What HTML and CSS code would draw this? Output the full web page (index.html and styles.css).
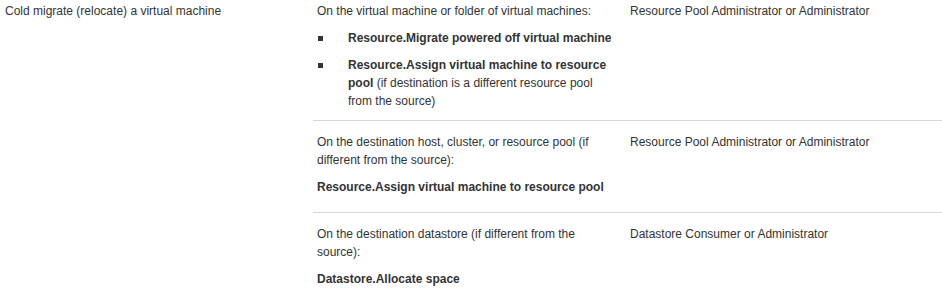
FILE: index.html
```html
<!DOCTYPE html>
<html lang="en">
<head>
<meta charset="utf-8">
<title>Privileges</title>
<link rel="stylesheet" href="styles.css">
</head>
<body>
<table class="priv">
  <colgroup>
    <col class="c-task">
    <col class="c-priv">
    <col class="c-role">
  </colgroup>
  <tbody>
    <tr class="first">
      <td class="task" rowspan="3">Cold migrate (relocate) a virtual machine</td>
      <td class="priv-cell">
        <p>On the virtual machine or folder of virtual machines:</p>
        <ul class="bullets">
          <li><span class="txt"><b>Resource.Migrate powered off virtual machine</b></span></li>
          <li><span class="txt"><b>Resource.Assign virtual machine to resource pool</b> (if destination is a different resource pool from the source)</span></li>
        </ul>
      </td>
      <td class="role">Resource Pool Administrator or Administrator</td>
    </tr>
    <tr>
      <td class="priv-cell ruled">
        <p>On the destination host, cluster, or resource pool (if different from the source):</p>
        <p><b>Resource.Assign virtual machine to resource pool</b></p>
      </td>
      <td class="role ruled">Resource Pool Administrator or Administrator</td>
    </tr>
    <tr>
      <td class="priv-cell ruled">
        <p>On the destination datastore (if different from the source):</p>
        <p><b>Datastore.Allocate space</b></p>
      </td>
      <td class="role ruled">Datastore Consumer or Administrator</td>
    </tr>
  </tbody>
</table>
</body>
</html>
```
FILE: styles.css
```css
html, body {
  margin: 0;
  padding: 0;
  background: #ffffff;
}

body {
  font-family: "Liberation Sans", Arial, sans-serif;
  font-size: 12px;
  line-height: 18px;
  color: #333333;
}

.priv {
  width: 942px;
  border-collapse: collapse;
  table-layout: fixed;
}

.c-task { width: 313px; }
.c-priv { width: 313px; }
.c-role { width: 316px; }

.priv td {
  vertical-align: top;
  padding: 12px 12px 7px 4px;
}

.priv tr.first td {
  padding-top: 2px;
}

.priv td.task {
  padding-left: 5px;
}

.priv td.ruled {
  border-top: 1px solid #d6d6d6;
}

.priv p {
  margin: 0 0 9px 0;
}

.bullets {
  list-style: none;
  margin: 0 0 3px 0;
  padding: 0;
}

.bullets li {
  display: grid;
  grid-template-columns: 31px 1fr;
}

.bullets li + li {
  margin-top: 9px;
}

.bullets li::before {
  content: "";
  width: 5px;
  height: 5px;
  margin-top: 7px;
  margin-left: 1px;
  background: #333333;
}

.priv b {
  font-weight: bold;
}
```
